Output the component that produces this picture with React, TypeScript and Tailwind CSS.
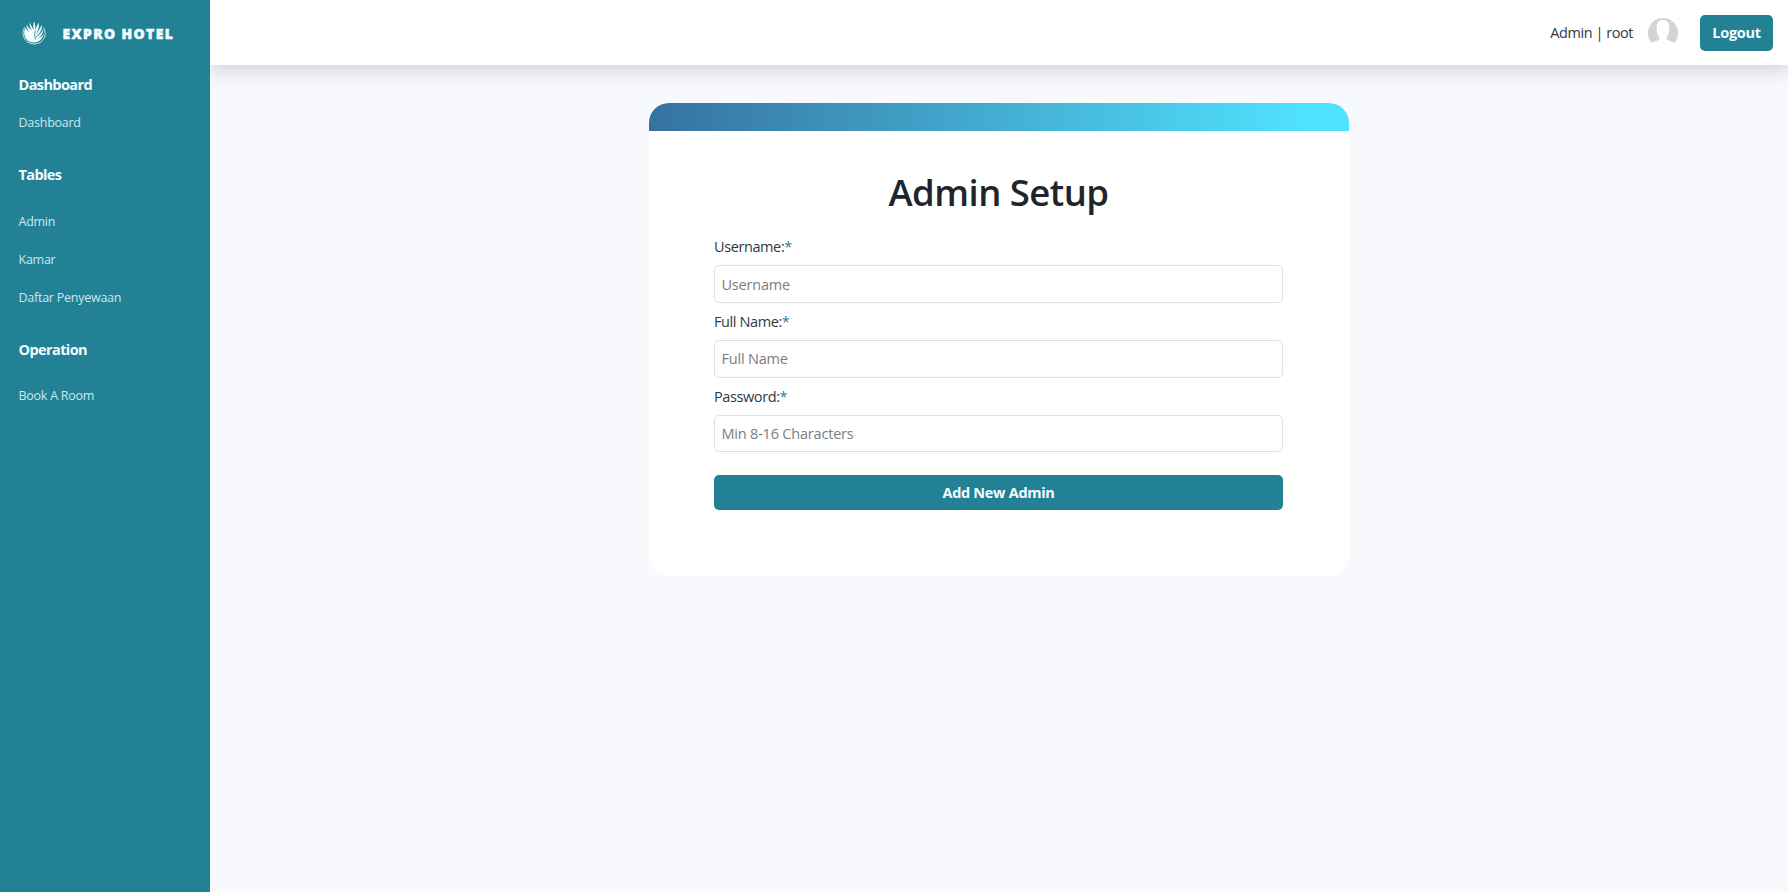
import React from "react";

function Logo() {
  return (
    <svg className="h-6 w-6" viewBox="0 0 24 24" fill="none">
      <path d="M2.600 6.200C-1.400 12.600 2.200 22.900 12 23C21.400 22.900 25.600 14.500 21.600 6.500" stroke="#c4e4ea" strokeWidth="1" />
      <path
        fill="#f4fdff"
        d="M12 21.500C5.500 21.300 2.100 17 2.200 11.500C2.300 9.500 2.800 8 3.500 6.800C4.300 8.500 5.700 10 7.400 11.200C5.600 9 4.400 6.500 4.300 3.600C6 6 7.900 8.200 9.800 9.700C8.300 7.500 7.400 4.500 7.600 1.600C9 4.500 10.300 7 11.700 8.800C11 6 11.200 3 12.100 .4C13.400 3 13.600 6.600 13.200 9.600C14.200 7 15.200 4 16.600 1.600C17.500 5.600 16 9.600 13.900 13.400C16.200 10.500 18.300 7.200 19.700 3.700C20.600 8.300 17.900 12 14.300 15.400C17 13.500 19.400 11 21.100 7.700C22 12 19 15 15.700 17.500C17.700 16.900 19.900 15.600 21.700 13.300C20 18.800 16.500 21.600 12 21.500Z"
      />
      <path d="M13.200 9.600C12.700 12.500 12.400 15 13.600 18.300M21 8.700C19.300 11.900 16.400 14.500 14 15.900" stroke="#238196" strokeWidth="0.800" />
    </svg>
  );
}

function Avatar() {
  return (
    <svg className="h-[30px] w-[30px]" viewBox="0 0 30 30">
      <path
        fill="#d1d5da"
        d="M15 0A15 15 0 0 0 3.900 25.100C5.200 23.600 9.500 22.800 11.200 21.500C11.800 20.600 11.500 19.500 10.700 18.200C9.100 16 8.500 12.500 8.700 9C9 4.300 11.300 2 15 2C18.700 2 21 4.300 21.300 9C21.500 12.500 20.900 16 19.300 18.200C18.500 19.500 18.200 20.600 18.800 21.500C20.500 22.800 24.800 23.600 26.100 25.100A15 15 0 0 0 15 0Z"
      />
    </svg>
  );
}

function SidebarLink({ children }: { children: React.ReactNode }) {
  return (
    <a className="flex h-[38.300px] items-center pt-px pl-[2.500px] text-[12.500px] tracking-[-0.250px] text-[#c9e9ee]">
      <span>{children}</span>
    </a>
  );
}

function SidebarHeading({ children }: { children: React.ReactNode }) {
  return <h2 className="flex h-6 items-center pl-[2.500px] text-[14.500px] font-bold tracking-[-0.600px] text-[#f3fdff]">{children}</h2>;
}

function Sidebar() {
  return (
    <aside className="relative z-10 flex w-[209.500px] shrink-0 flex-col bg-[#238196] px-4">
      <div className="flex h-[65px] items-center pl-[5.500px]">
        <Logo />
        <span className="mt-px ml-[17px] whitespace-nowrap text-[14px] font-extrabold tracking-[1.350px] text-[#f3fdff] [-webkit-text-stroke:0.500px_#f3fdff]">EXPRO HOTEL</span>
      </div>
      <nav>
        <section className="border-b border-[#2b8599] pt-[8px] pb-[6px]">
          <SidebarHeading>Dashboard</SidebarHeading>
          <div className="mt-[7px]">
            <SidebarLink>Dashboard</SidebarLink>
          </div>
        </section>
        <section className="border-b border-[#2b8599] pt-[14px] pb-[5px]">
          <SidebarHeading>Tables</SidebarHeading>
          <div className="mt-[15px]">
            <SidebarLink>Admin</SidebarLink>
            <SidebarLink>Kamar</SidebarLink>
            <SidebarLink>Daftar Penyewaan</SidebarLink>
          </div>
        </section>
        <section className="pt-[15px]">
          <SidebarHeading>Operation</SidebarHeading>
          <div className="mt-[15px]">
            <SidebarLink>Book A Room</SidebarLink>
          </div>
        </section>
      </nav>
    </aside>
  );
}

function Field({ label, placeholder, type = "text" }: { label: string; placeholder: string; type?: string }) {
  return (
    <label className="block h-[74.800px]">
      <span className="block h-[29px] text-[14.500px] leading-[22px] tracking-[-0.400px] text-[#33383d]">
        {label}:<span className="text-[#238196]">*</span>
      </span>
      <input
        type={type}
        placeholder={placeholder}
        className="block h-[37.500px] w-full rounded-[5px] border border-[#dedfe1] bg-white px-[6.500px] text-[14.500px] tracking-[-0.200px] placeholder:text-[#7b7d80]"
      />
    </label>
  );
}

export default function App() {
  return (
    <div className="flex h-screen overflow-hidden bg-[#f8f9fd] font-['Open_Sans','Noto_Sans',sans-serif] text-[#212529]">
      <Sidebar />
      <div className="flex min-w-0 flex-1 flex-col">
        <header className="flex h-[65px] shrink-0 items-center justify-end bg-white pr-[15px] shadow-[0_8px_16px_rgba(0,0,0,0.13)]">
          <span className="pt-px text-[14.500px] tracking-[-0.450px] text-[#33383d]">Admin | root</span>
          <span className="ml-[15px]">
            <Avatar />
          </span>
          <button className="ml-[22px] h-9 w-[73px] rounded-[5px] bg-[#238196] pt-px text-[14.500px] font-bold tracking-[-0.300px] text-[#f3fdff]">Logout</button>
        </header>
        <main className="flex flex-1 items-start justify-center pt-[38px]">
          <div className="h-[473px] w-[699.500px] overflow-hidden rounded-[20px] bg-white">
            <div className="h-7 bg-linear-to-r/srgb from-[#3672a0] to-[#50e3ff] to-95%" />
            <form className="flex flex-col pr-[65.500px] pl-[65px]">
              <h1 className="mt-[38px] text-center text-[36.500px] leading-[46px] font-semibold tracking-[-0.550px]">Admin Setup</h1>
              <div className="mt-[21.300px]">
                <Field label="Username" placeholder="Username" />
                <Field label="Full Name" placeholder="Full Name" />
                <Field label="Password" placeholder="Min 8-16 Characters" />
              </div>
              <button type="button" className="mt-[14.300px] h-[35.500px] rounded-[5px] bg-[#238196] text-[14.500px] font-bold tracking-[-0.300px] text-[#f3fdff]">
                Add New Admin
              </button>
            </form>
          </div>
        </main>
      </div>
    </div>
  );
}
